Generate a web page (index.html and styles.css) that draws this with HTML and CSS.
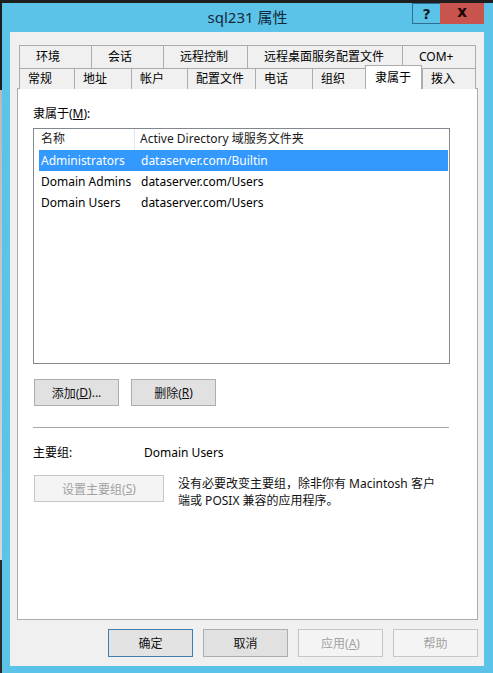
FILE: index.html
```html
<!DOCTYPE html>
<html lang="zh-CN">
<head>
<meta charset="utf-8">
<title>sql231 属性</title>
<link rel="stylesheet" href="styles.css">
</head>
<body>
<div class="window">
  <div class="titlebar">
    <div class="tb-spacer"></div>
    <div class="title">sql231 属性</div>
    <div class="caption-btns">
      <span class="cbtn cbtn-help">?</span>
      <span class="cbtn cbtn-close">x</span>
    </div>
  </div>
  <div class="client">
    <div class="tabs">
      <div class="tabrow row1">
        <div class="tab">环境</div>
        <div class="tab">会话</div>
        <div class="tab">远程控制</div>
        <div class="tab">远程桌面服务配置文件</div>
        <div class="tab tab-last">COM+</div>
      </div>
      <div class="tabrow row2">
        <div class="tab">常规</div>
        <div class="tab">地址</div>
        <div class="tab">帐户</div>
        <div class="tab">配置文件</div>
        <div class="tab">电话</div>
        <div class="tab">组织</div>
        <div class="tab tab-active">隶属于</div>
        <div class="tab tab-last">拨入</div>
      </div>
    </div>
    <div class="panel">
      <div class="label">隶属于(<u>M</u>):</div>
      <div class="listview">
        <div class="lv-header">
          <div class="lv-hcell lv-hcell-first">名称</div>
          <div class="lv-hcell">Active Directory 域服务文件夹</div>
        </div>
        <div class="lv-row lv-row-selected">
          <div class="lv-cell lv-cell-first">Administrators</div>
          <div class="lv-cell">dataserver.com/Builtin</div>
        </div>
        <div class="lv-row">
          <div class="lv-cell lv-cell-first">Domain Admins</div>
          <div class="lv-cell">dataserver.com/Users</div>
        </div>
        <div class="lv-row">
          <div class="lv-cell lv-cell-first">Domain Users</div>
          <div class="lv-cell">dataserver.com/Users</div>
        </div>
      </div>
      <div class="btn-row">
        <div class="btn">添加(<u>D</u>)...</div>
        <div class="btn">删除(<u>R</u>)</div>
      </div>
      <div class="separator"></div>
      <div class="primary-row">
        <div class="primary-label">主要组:</div>
        <div class="primary-value">Domain Users</div>
      </div>
      <div class="primary-set">
        <div class="btn btn-disabled btn-wide">设置主要组(<u>S</u>)</div>
        <div class="note">没有必要改变主要组，除非你有 Macintosh 客户<br>端或 POSIX 兼容的应用程序。</div>
      </div>
    </div>
    <div class="dlg-buttons">
      <div class="btn btn-dlg btn-default">确定</div>
      <div class="btn btn-dlg">取消</div>
      <div class="btn btn-dlg btn-disabled">应用(<u>A</u>)</div>
      <div class="btn btn-dlg btn-disabled">帮助</div>
    </div>
  </div>
</div>
</body>
</html>
```

FILE: styles.css
```css
* { box-sizing: border-box; }

html, body {
  margin: 0;
  padding: 0;
}

body {
  width: 493px;
  height: 673px;
  overflow: hidden;
  background: linear-gradient(to bottom, #1e1e1e 0, #1e1e1e 90px, #b9b9b9 90px, #d8d8d8 560px, #2a2a2a 560px);
  font-family: "Noto Sans", "Noto Sans CJK SC", sans-serif;
  font-size: 12px;
  color: #000;
}

.window {
  margin: 3px 0 0 2px;
  width: 491px;
  height: 670px;
  background: #5cc3e8;
  display: flex;
  flex-direction: column;
}

.titlebar {
  height: 29px;
  display: grid;
  grid-template-columns: 1fr auto 1fr;
  align-items: start;
}

.title {
  font-size: 15px;
  line-height: 29px;
  color: #13293b;
  white-space: nowrap;
}

.caption-btns {
  display: flex;
  justify-content: flex-end;
  margin-right: 9px;
}

.cbtn {
  height: 21px;
  display: flex;
  align-items: center;
  justify-content: center;
  font-family: "DejaVu Sans", sans-serif;
  font-weight: bold;
  color: #111;
}

.cbtn-help {
  width: 28px;
  border: 1px solid #2e6e93;
  border-right: none;
  font-size: 14px;
  color: #0d1a24;
}

.cbtn-close {
  width: 44px;
  background: #c9534d;
  font-size: 15px;
  line-height: 1;
  padding-bottom: 3px;
  color: #1a0505;
}

.client {
  margin: 0 9px 0 8px;
  height: 634px;
  background: #f0f0f0;
  padding: 13px 0 0 7px;
}

.tabs {
  width: 461px;
  padding-left: 2px;
}

.tabrow {
  display: grid;
}

.row1 {
  grid-template-columns: 72px 72px 84px 155px 74px;
  height: 23px;
}

.row2 {
  grid-template-columns: 55px 57px 56px 68px 57px 53px 57px 54px;
  height: 20px;
  position: relative;
  z-index: 2;
}

.tab {
  border-top: 1px solid #acacac;
  border-left: 1px solid #acacac;
  background: #f0f0f0;
  white-space: nowrap;
  overflow: visible;
}

.tab-last {
  border-right: 1px solid #acacac;
}

.row1 .tab {
  line-height: 21px;
  padding-left: 16px;
}

.row2 .tab {
  line-height: 20px;
  padding-left: 8px;
}

.row2 .tab-active {
  background: #fff;
  border-right: 1px solid #acacac;
  margin-top: -3px;
  height: 24px;
  padding-top: 2px;
  padding-left: 9px;
  position: relative;
  z-index: 3;
}

.panel {
  width: 461px;
  height: 532px;
  border: 1px solid #acacac;
  background: #fff;
  padding: 17px 0 0 15px;
  position: relative;
  z-index: 1;
}

.label {
  line-height: 16px;
  margin-bottom: 6px;
}

.listview {
  width: 417px;
  height: 236px;
  border: 1px solid #828790;
  background: #fff;
}

.lv-header {
  display: grid;
  grid-template-columns: 101px 1fr;
  height: 21px;
}

.lv-hcell {
  line-height: 20px;
  padding-left: 5px;
  white-space: nowrap;
  color: #1a1a1a;
}

.lv-hcell-first {
  padding-left: 7px;
  border-right: 1px solid #e3e5e8;
}

.lv-row {
  display: grid;
  grid-template-columns: 96px 1fr;
  height: 21px;
  margin: 0 1px 0 5px;
}

.lv-cell {
  line-height: 21px;
  padding-left: 6px;
  white-space: nowrap;
}

.lv-cell-first {
  padding-left: 2px;
}

.lv-row-selected {
  background: #3399ff;
  color: #fff;
}

.btn-row {
  display: flex;
  gap: 12px;
  margin: 15px 0 0 1px;
}

.btn {
  width: 85px;
  height: 27px;
  background: #e1e1e1;
  border: 1px solid #adadad;
  display: flex;
  align-items: center;
  justify-content: center;
  white-space: nowrap;
  color: #111;
}

.separator {
  width: 416px;
  height: 1px;
  background: #a8a8a8;
  margin-top: 21px;
}

.primary-row {
  display: flex;
  margin-top: 17px;
  line-height: 16px;
}

.primary-label {
  width: 111px;
}

.primary-set {
  display: flex;
  margin: 14px 0 0 1px;
  gap: 14px;
}

.btn-wide {
  width: 130px;
  flex: none;
}

.btn-disabled {
  background: #f4f4f4;
  border-color: #c6c6c6;
  color: #a2a2a2;
}

.note {
  line-height: 17px;
  color: #111;
}

.dlg-buttons {
  display: flex;
  justify-content: flex-end;
  gap: 10px;
  width: 461px;
  margin-top: 9px;
}

.btn-dlg {
  height: 28px;
}

.btn-default {
  border-color: #3c7fb1;
  background: #e3e3e3;
}
```
